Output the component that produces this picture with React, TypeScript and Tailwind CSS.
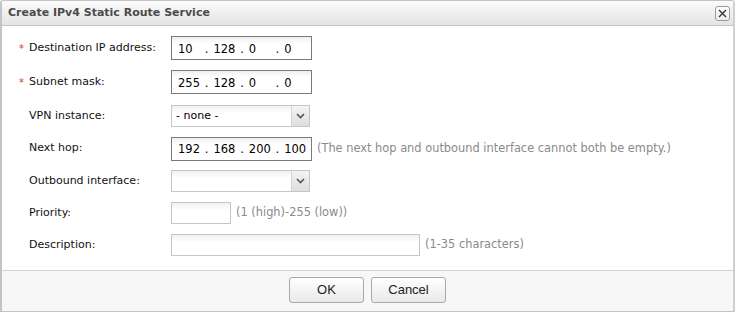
import React from "react";

const font = { fontFamily: "Tahoma, 'DejaVu Sans', sans-serif" };

function IpBox({ parts }: { parts: string[] }) {
  return (
    <div className="flex h-[24px] w-[141px] items-center border border-[#7a7a7a] bg-gradient-to-b from-[#eef0f0] to-white to-[30%] pl-[6px] pt-[3px] text-[11.5px] text-black">
      {parts.map((p, i) => (
        <React.Fragment key={i}>
          <span className="w-[28px]">{p}</span>
          {i < 3 && <span className="w-[9px] text-left">.</span>}
        </React.Fragment>
      ))}
    </div>
  );
}

function Select({ value }: { value: string }) {
  return (
    <div className="flex h-[22px] w-[139px] items-stretch border border-[#c6c6c6] bg-gradient-to-b from-[#f1f3f3] to-white to-[40%] text-[11px] text-black">
      <span className="flex flex-1 items-center pl-[4px]">{value}</span>
      <span className="flex w-[18px] items-center justify-center border-l border-[#d6d6d6] bg-gradient-to-b from-[#f4f4f4] to-[#dedede]">
        <svg width="9" height="6" viewBox="0 0 9 6">
          <path d="M1 1 L4.5 4.5 L8 1" stroke="#555" strokeWidth="1.6" fill="none" />
        </svg>
      </span>
    </div>
  );
}

function Row({
  h,
  label,
  req,
  children,
}: {
  h: string;
  label: string;
  req?: boolean;
  children: React.ReactNode;
}) {
  return (
    <div className={`flex items-center ${h}`}>
      <div className="flex w-[169px] items-center pl-[17px] text-[11px] text-[#111]">
        <span className="w-[10px] text-[10px] text-[#e0332f]">{req ? "*" : ""}</span>
        <span>{label}</span>
      </div>
      {children}
    </div>
  );
}

export default function App() {
  return (
    <div className="h-[313px] w-[735px] bg-white" style={font}>
      <div className="flex h-[312px] flex-col rounded-t-[3px] border-x-2 border-b border-t border-[#c4c4c4] border-r-[#d0d0d0]">
        <div className="flex h-[25px] items-center justify-between border-b border-[#c4c4c4] bg-gradient-to-b from-[#fbfbfb] to-[#e4e4e4] pl-[6px] pr-[3px]">
          <span className="text-[11px] font-bold text-[#4b4b4b]">Create IPv4 Static Route Service</span>
          <span className="flex h-[15px] w-[15px] items-center justify-center rounded-[3px] border border-[#9a9a9a] bg-gradient-to-b from-white to-[#ececec]">
            <svg width="9" height="9" viewBox="0 0 9 9">
              <path d="M1 1 L8 8 M8 1 L1 8" stroke="#333" strokeWidth="1.4" />
            </svg>
          </span>
        </div>

        <div className="flex-1 pt-[5px]">
          <Row h="h-[34px]" label="Destination IP address:" req>
            <IpBox parts={["10", "128", "0", "0"]} />
          </Row>
          <Row h="h-[34px]" label="Subnet mask:" req>
            <IpBox parts={["255", "128", "0", "0"]} />
          </Row>
          <Row h="h-[34px]" label="VPN instance:">
            <Select value="- none -" />
          </Row>
          <Row h="h-[31px]" label="Next hop:">
            <IpBox parts={["192", "168", "200", "100"]} />
            <span className="ml-[5px] text-[11.4px] text-[#8a8a8a]">
              (The next hop and outbound interface cannot both be empty.)
            </span>
          </Row>
          <Row h="h-[34px]" label="Outbound interface:">
            <Select value="" />
          </Row>
          <Row h="h-[30px]" label="Priority:">
            <div className="h-[22px] w-[60px] border border-[#c6c6c6] bg-gradient-to-b from-[#f1f3f3] to-white to-[40%]" />
            <span className="ml-[5px] text-[11.4px] text-[#8a8a8a]">(1 (high)-255 (low))</span>
          </Row>
          <Row h="h-[34px]" label="Description:">
            <div className="h-[22px] w-[249px] border border-[#c6c6c6] bg-gradient-to-b from-[#f1f3f3] to-white to-[40%]" />
            <span className="ml-[5px] text-[11.4px] text-[#8a8a8a]">(1-35 characters)</span>
          </Row>
        </div>

        <div className="flex h-[41px] items-center justify-center gap-[7px] border-t border-[#d4d4d4] bg-[#f7f7f7] pb-[2px]">
          {["OK", "Cancel"].map((b) => (
            <button
              key={b}
              className="h-[26px] w-[75px] rounded-[3px] border border-[#a9a9a9] bg-gradient-to-b from-white to-[#e9e9e9] text-[13px] text-[#222]"
              style={{ fontFamily: "'Liberation Sans', Arial, sans-serif" }}
            >
              {b}
            </button>
          ))}
        </div>
      </div>
    </div>
  );
}
